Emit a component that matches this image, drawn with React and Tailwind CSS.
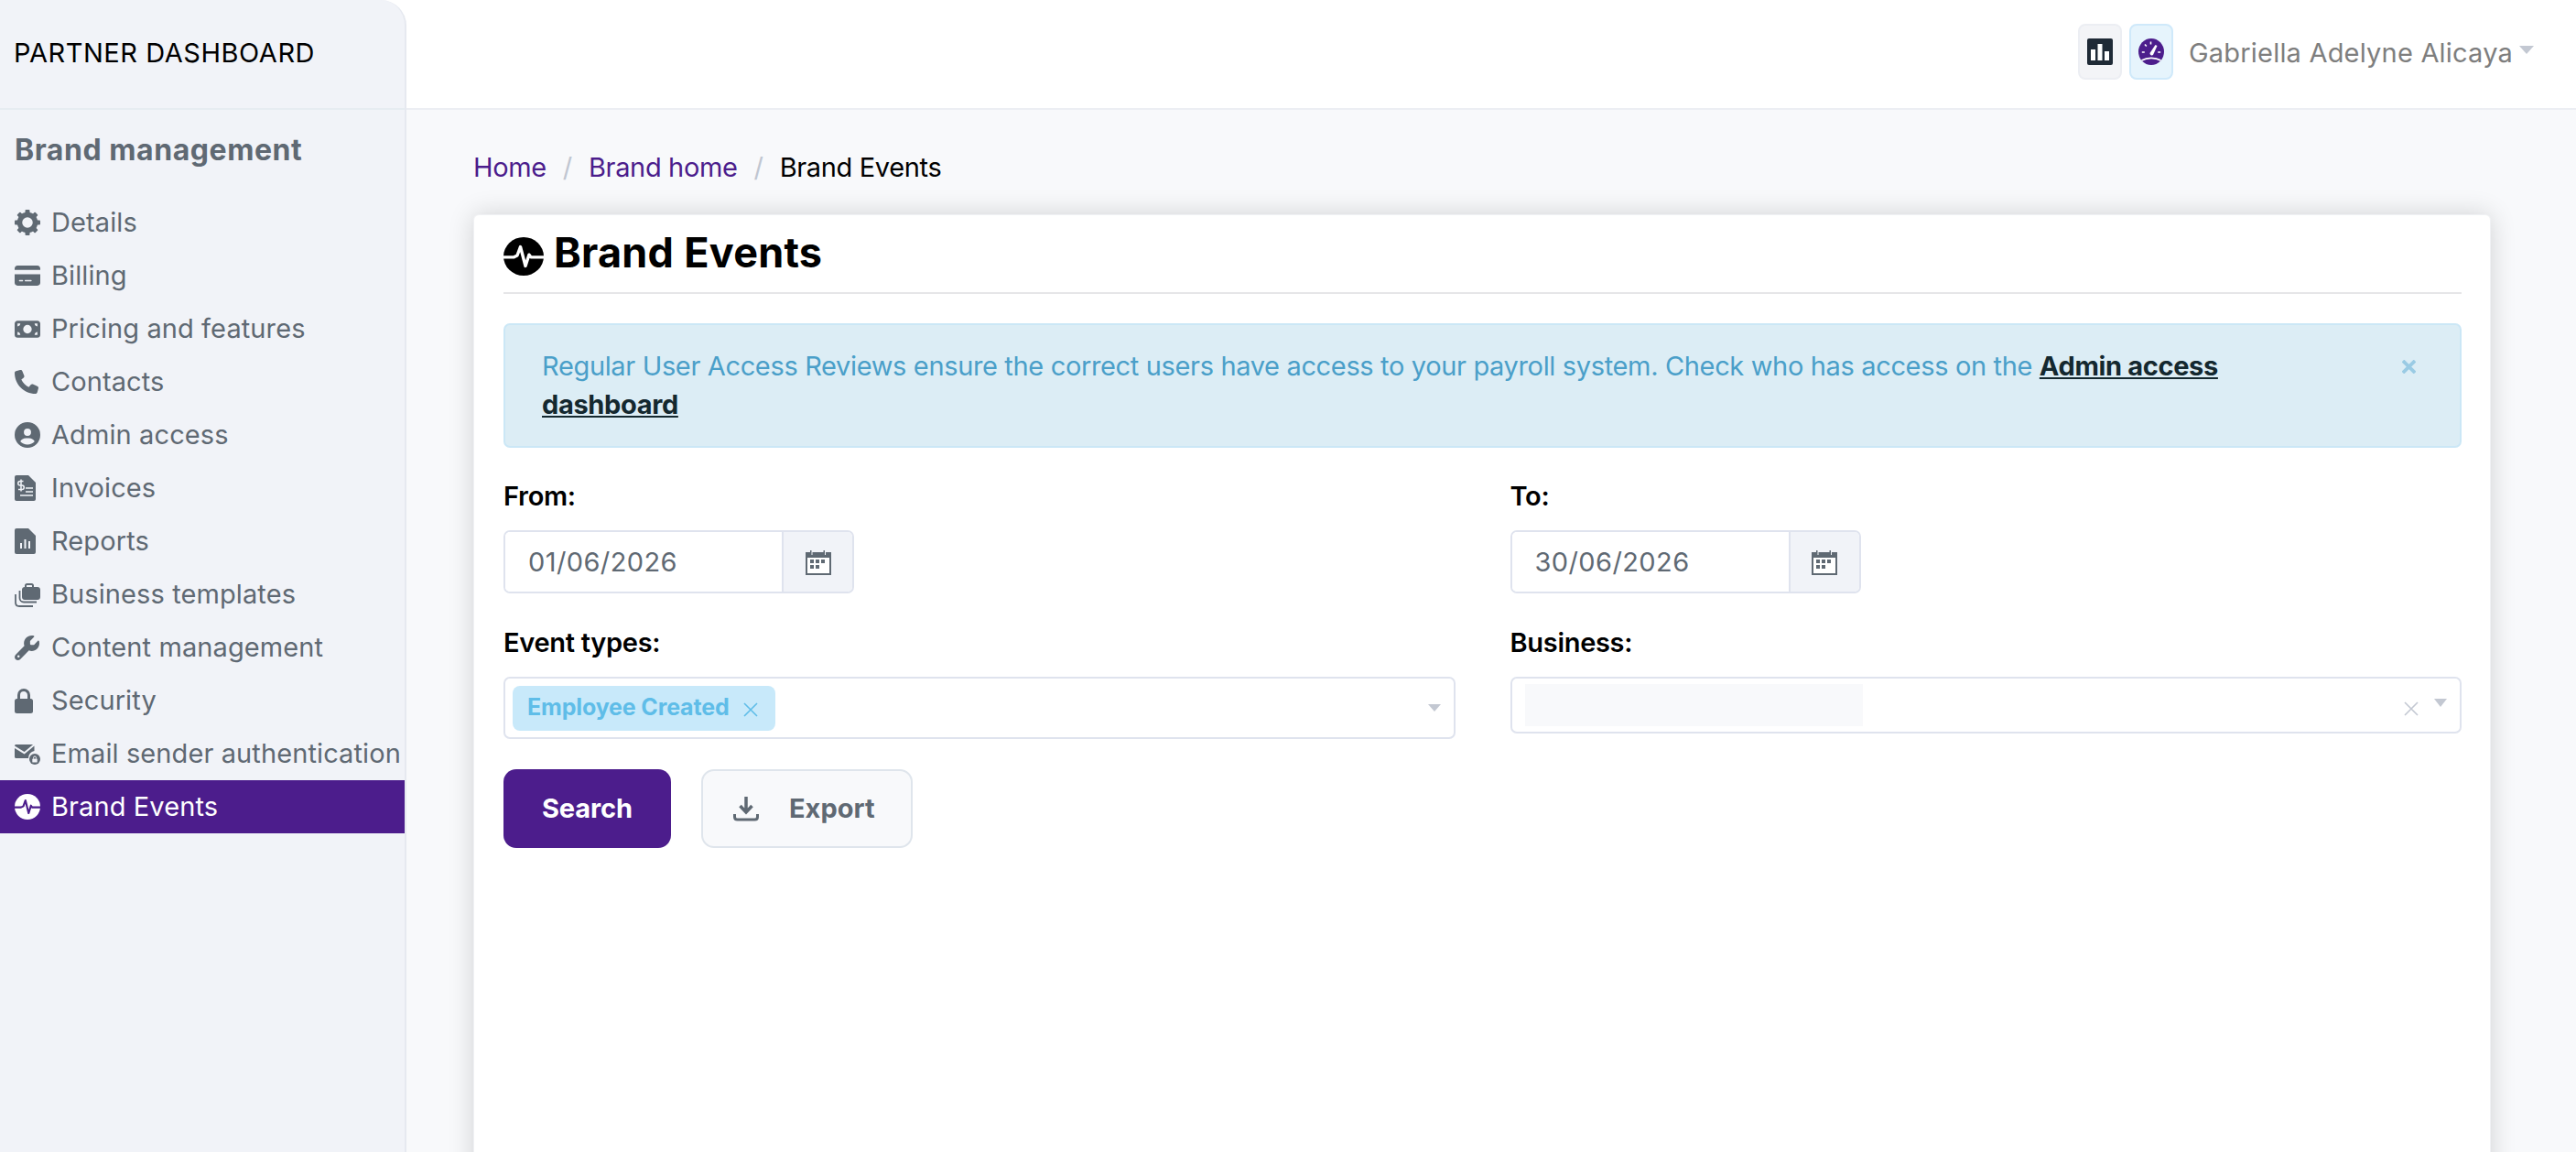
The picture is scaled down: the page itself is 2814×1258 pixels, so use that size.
import React from 'react';
import { FaCreditCard, FaMoneyBill, FaPhone, FaCircleUser, FaWrench } from 'react-icons/fa6';

//---custom icons---
const PulseIcon = ({ className, line }) => (
	<svg viewBox="0 0 44 44" preserveAspectRatio="none" className={className}>
		<circle cx="22" cy="22" r="22" fill="currentColor" />
		<path d="M0 23h11l4-2 3.500-10 5.500 22 4-13 2 3h14" fill="none" stroke={line} strokeWidth="3.400" strokeLinejoin="round" />
	</svg>
);

const GearIcon = ({ className }) => (
	<svg viewBox="0 0 28 28" className={className} fill="currentColor">
		<circle cx="14" cy="14" r="8.500" fill="none" stroke="currentColor" strokeWidth="5.500" />
		{[0, 45, 90, 135, 180, 225, 270, 315].map((deg) => (
			<rect key={deg} x="11.500" y="0" width="5" height="5" rx="1" transform={`rotate(${deg} 14 14)`} />
		))}
	</svg>
);

const InvoiceIcon = ({ className }) => (
	<svg viewBox="0 0 23 28" className={className}>
		<path d="M2 0h13l8 8v18a2 2 0 0 1-2 2H2a2 2 0 0 1-2-2V2a2 2 0 0 1 2-2z" fill="currentColor" />
		<path d="M9.500 6.500H6a2 2 0 0 0 0 4.500h2a2 2 0 0 1 0 4.500H4M7 4.500v13M12 14h8M12 18h8M6 22h14" fill="none" stroke="#f1f3f8" strokeWidth="1.500" />
	</svg>
);

const ReportIcon = ({ className }) => (
	<svg viewBox="0 0 23 28" className={className}>
		<path d="M2 0h13l8 8v18a2 2 0 0 1-2 2H2a2 2 0 0 1-2-2V2a2 2 0 0 1 2-2z" fill="currentColor" />
		<path d="M6 16h2v6H6zM10.500 12h2v10h-2zM15 14h2v8h-2z" fill="#f1f3f8" />
	</svg>
);

const LockIcon = ({ className }) => (
	<svg viewBox="0 0 20 27" className={className}>
		<path d="M4.500 12V7a5.500 5.500 0 0 1 11 0v5" fill="none" stroke="currentColor" strokeWidth="3" />
		<rect y="11" width="20" height="16" rx="2.500" fill="currentColor" />
	</svg>
);

const BriefcaseStack = ({ className }) => (
	<svg viewBox="0 0 28 28" className={className} fill="currentColor">
		<path d="M11 6V4.500C11 3 12 2 13.500 2h5C20 2 21 3 21 4.500V6h4c1.700 0 3 1.300 3 3v8c0 1.700-1.300 3-3 3H11c-1.700 0-3-1.300-3-3V9c0-1.700 1.300-3 3-3zm2-1.500V6h6V4.500c0-.3-.2-.5-.5-.5h-5c-.3 0-.5.2-.5.500z" />
		<path d="M5.500 10v8c0 2.500 2 4.500 4.500 4.500h14M1 14v9c0 2.500 1.500 4 4 4h15" fill="none" stroke="currentColor" strokeWidth="1.800" />
	</svg>
);

const MailLock = ({ className }) => (
	<svg viewBox="0 0 28 28" className={className} fill="currentColor">
		<path d="M0 5.500C0 4.700.7 4 1.500 4h18.600L10.600 12 0 5.500z" />
		<path d="M0 8l10.600 6.500L21.500 5.500V11a8 8 0 0 0-6.500 8H1.500C.7 19 0 18.300 0 17.500V8z" />
		<circle cx="22" cy="20" r="6" />
		<rect x="19.300" y="19.500" width="5.400" height="4" rx=".6" fill="#f1f3f8" />
		<path d="M20.500 19.500v-1a1.500 1.500 0 0 1 3 0v1" fill="none" stroke="#f1f3f8" strokeWidth="1" />
	</svg>
);

const CalendarIcon = ({ className }) => (
	<svg viewBox="0 0 28 28" className={className}>
		<path d="M0 3h5V1h1.500v5h1V3h12V1H21v5h1V3h6v25H0z" fill="currentColor" />
		<rect x="2" y="9" width="24" height="17" fill="#fff" />
		<path d="M5 11h4v4H5zM11 11h4v4h-4zM17 11h4v4h-4zM5 17h4v4H5zM11 17h4v4h-4z" fill="currentColor" />
	</svg>
);

const GaugeIcon = ({ className }) => (
	<svg viewBox="0 0 28 29" className={className}>
		<ellipse cx="14" cy="14.500" rx="14" ry="14.500" fill="#4c1d8c" />
		<path d="M3.500 24c6-3.500 15-3.500 21 0" fill="none" stroke="#fff" strokeWidth="1.800" />
		<path d="M12.500 16l6-9 2 1-4.500 10a2.200 2.200 0 0 1-3.500-2z" fill="#fff" />
		<path d="M13.500 3.500v3M7 6.500l1.800 2M3.800 15h3M24.200 15h-3" stroke="#fff" strokeWidth="1.600" />
	</svg>
);

const ThinX = ({ className }) => (
	<svg viewBox="0 0 16 16" className={className}>
		<path d="M1 1l14 14M15 1L1 15" fill="none" stroke="currentColor" strokeWidth="1.600" />
	</svg>
);

const menu = [
	{ label: 'Details', icon: <GearIcon className="w-[28px] h-[28px]" /> },
	{ label: 'Billing', icon: <FaCreditCard className="w-[28px] h-[28px]" /> },
	{ label: 'Pricing and features', icon: <FaMoneyBill className="w-[29px] h-[29px]" /> },
	{ label: 'Contacts', icon: <FaPhone className="w-[26px] h-[26px]" /> },
	{ label: 'Admin access', icon: <FaCircleUser className="w-[28px] h-[28px]" /> },
	{ label: 'Invoices', icon: <InvoiceIcon className="w-[23px] h-[28px]" /> },
	{ label: 'Reports', icon: <ReportIcon className="w-[23px] h-[28px]" /> },
	{ label: 'Business templates', icon: <BriefcaseStack className="w-[28px] h-[28px]" /> },
	{ label: 'Content management', icon: <FaWrench className="w-[27px] h-[27px]" /> },
	{ label: 'Security', icon: <LockIcon className="w-[20px] h-[27px]" /> },
	{ label: 'Email sender authentication', icon: <MailLock className="w-[28px] h-[28px]" /> },
];

function Sidebar() {
	return (
		<aside className="w-[444px] shrink-0 h-full bg-[#f1f3f8] border-r-2 border-[#e6e9f0] rounded-tr-[28px]">
			<div className="h-[120px] flex items-center pl-[15px] border-b-2 border-[#e6ecf1] text-[29px] text-black tracking-[0.55px] pb-[2px]">
				PARTNER DASHBOARD
			</div>
			<h2 className="pl-[16px] pt-[25px] h-[94px] text-[32px] leading-[38px] font-bold text-[#5f6973] tracking-[0.55px]">Brand management</h2>
			<nav className="flex flex-col">
				{menu.map((item) => (
					<a key={item.label} className="h-[58px] flex items-center pl-[16px] gap-[12px] text-[29px] text-[#5f6973] tracking-[0.1px]">
						<span className="w-[28px] flex justify-start">{item.icon}</span>
						<span className="whitespace-nowrap">{item.label}</span>
					</a>
				))}
				<a className="h-[58px] flex items-center pl-[16px] gap-[12px] text-[29px] text-white bg-[#4c1d8c] tracking-[0.1px]">
					<PulseIcon className="w-[28px] h-[28px] text-white" line="#4c1d8c" />
					<span>Brand Events</span>
				</a>
			</nav>
		</aside>
	);
}

function Header() {
	return (
		<header className="h-[120px] shrink-0 bg-white border-b-2 border-[#eceef3] flex items-center justify-end pb-[5px] pr-[46px]">
			<div className="w-[48px] h-[61px] rounded-[8px] bg-[#f3f4f7] border-2 border-[#eceef3] flex items-center justify-center">
				<svg viewBox="0 0 28 29" className="w-[28px] h-[29px]">
					<rect width="28" height="29" rx="2" fill="#1f2a36" />
					<path d="M4 12h5v12H4zM11.500 6h5v18h-5zM19 14h5v10h-5z" fill="#fff" />
				</svg>
			</div>
			<div className="ml-[8px] w-[48px] h-[61px] rounded-[8px] bg-[#e6f4fc] border-2 border-[#cfe9fa] flex items-center justify-center">
				<GaugeIcon className="w-[28px] h-[29px]" />
			</div>
			<span className="ml-[17px] mt-[2px] text-[29px] text-[#7e7e7e] tracking-[0.2px] whitespace-nowrap">Gabriella Adelyne Alicaya</span>
			<span className="ml-[7px] mt-[-4px] w-0 h-0 border-x-[8px] border-x-transparent border-t-[9px] border-t-[#c3c8d2]" />
		</header>
	);
}

function DateField({ value }) {
	return (
		<div className="flex w-[383px] h-[69px] rounded-[7px] border-2 border-[#dfe3ee] overflow-hidden">
			<div className="flex-1 flex items-center pl-[25px] text-[29px] tracking-[0.4px] text-[#5f6973] bg-white">{value}</div>
			<div className="w-[77px] flex items-center justify-center bg-[#f1f3f8] border-l-2 border-[#dfe3ee]">
				<CalendarIcon className="w-[28px] h-[28px] text-[#5f6973]" />
			</div>
		</div>
	);
}

export default function App() {
	return (
		<div className="h-screen w-full overflow-hidden flex bg-white font-[Inter,sans-serif]">
			<Sidebar />
			<main className="flex-1 flex flex-col h-full min-w-0 bg-[#f8f9fb]">
				<Header />
				<div className="pl-[73px] pr-[93px] pt-[43px]">
					{/* breadcrumb */}
					<div className="flex items-center h-[40px] text-[29px] tracking-[-0.35px]">
						<a className="text-[#4c1d8c]">Home</a>
						<span className="mx-[18px] text-[#c0c6d1]">/</span>
						<a className="text-[#4c1d8c]">Brand home</a>
						<span className="mx-[18px] text-[#c0c6d1]">/</span>
						<span className="text-black">Brand Events</span>
					</div>

					{/* card */}
					<section className="mt-[31px] min-h-[1100px] bg-white rounded-[6px] border border-[#f0f1f4] shadow-[0_0_28px_rgba(0,0,0,0.16)] pl-[32px] pr-[31px]">
						<div className="h-[86px] flex items-center gap-[11px] border-b-2 border-[#e6e6e8] pb-[2px]">
							<PulseIcon className="w-[44px] h-[42px] text-black mt-[8px]" line="#fff" />
							<h1 className="text-[45px] font-bold text-black tracking-[0.25px]">Brand Events</h1>
						</div>

						<div className="mt-[32px] h-[136px] rounded-[7px] bg-[#dcedf5] border-2 border-[#cbe7f6] pl-[40px] pr-[24px] flex items-start justify-between pt-[24px]">
							<p className="text-[29px] leading-[42px] text-[#4a9fc9] tracking-[-0.35px] whitespace-nowrap">
								Regular User Access Reviews ensure the correct users have access to your payroll system. Check who has access on the{' '}
								<a className="font-bold text-[#14282f] underline">Admin access</a>
								<br />
								<a className="font-bold text-[#14282f] underline">dashboard</a>
							</p>
							<ThinX className="w-[15px] h-[15px] mt-[14px] mr-[24px] text-[#9acbe4] [&>path]:[stroke-width:4]" />
						</div>

						<div className="grid grid-cols-2 gap-x-[60px] mt-[33px]">
							<div>
								<label className="block h-[40px] leading-[40px] text-[29px] font-semibold text-black tracking-[-0.3px]">From:</label>
								<div className="mt-[17px]"><DateField value="01/06/2026" /></div>
							</div>
							<div>
								<label className="block h-[40px] leading-[40px] text-[29px] font-semibold text-black tracking-[-0.3px]">To:</label>
								<div className="mt-[17px]"><DateField value="30/06/2026" /></div>
							</div>
							<div className="mt-[34px]">
								<label className="block h-[40px] leading-[40px] text-[29px] font-semibold text-black tracking-[-0.3px]">Event types:</label>
								<div className="mt-[17px] h-[68px] rounded-[7px] border-2 border-[#dfe3ee] flex items-center pl-[8px] pr-[14px] justify-between">
									<div className="h-[49px] w-[287px] rounded-[8px] bg-[#c8e9fa] flex items-center pl-[16px] gap-[15px] text-[25px] font-bold text-[#5fbde8] tracking-[-0.15px]">
										Employee Created
										<ThinX className="w-[16px] h-[16px] mt-[4px]" />
									</div>
									<span className="w-0 h-0 border-x-[7px] border-x-transparent border-t-[8px] border-t-[#c3c8d2]" />
								</div>
							</div>
							<div className="mt-[34px]">
								<label className="block h-[40px] leading-[40px] text-[29px] font-semibold text-black tracking-[-0.3px]">Business:</label>
								<div className="mt-[17px] h-[62px] rounded-[7px] border-2 border-[#dfe3ee] flex items-center pl-[14px] pr-[14px]">
									<div className="w-[369px] h-[46px] bg-[#f8f9fb]" />
									<ThinX className="ml-auto w-[16px] h-[16px] mt-[8px] text-[#c3c8d2]" />
									<span className="ml-[17px] mb-[6px] w-0 h-0 border-x-[7px] border-x-transparent border-t-[9px] border-t-[#c3c8d2]" />
								</div>
							</div>
						</div>

						<div className="flex gap-[33px] mt-[33px]">
							<button className="w-[183px] h-[86px] rounded-[14px] bg-[#4c1d8c] text-white text-[29px] font-bold tracking-[-0.1px]">Search</button>
							<button className="w-[231px] h-[86px] rounded-[14px] bg-[#f8f9fb] border-2 border-[#dfe5ec] text-[#5f6973] text-[29px] font-bold flex items-center pl-[33px] gap-[33px]">
								<svg viewBox="0 0 28 28" className="w-[28px] h-[28px]">
									<path d="M14 1v15M7.500 11l6.500 7 6.500-7" fill="none" stroke="currentColor" strokeWidth="3.500" />
									<path d="M1.500 20v3c0 2 1 3 3 3h19c2 0 3-1 3-3v-3" fill="none" stroke="currentColor" strokeWidth="3" />
								</svg>
								Export
							</button>
						</div>
					</section>
				</div>
			</main>
		</div>
	);
}
